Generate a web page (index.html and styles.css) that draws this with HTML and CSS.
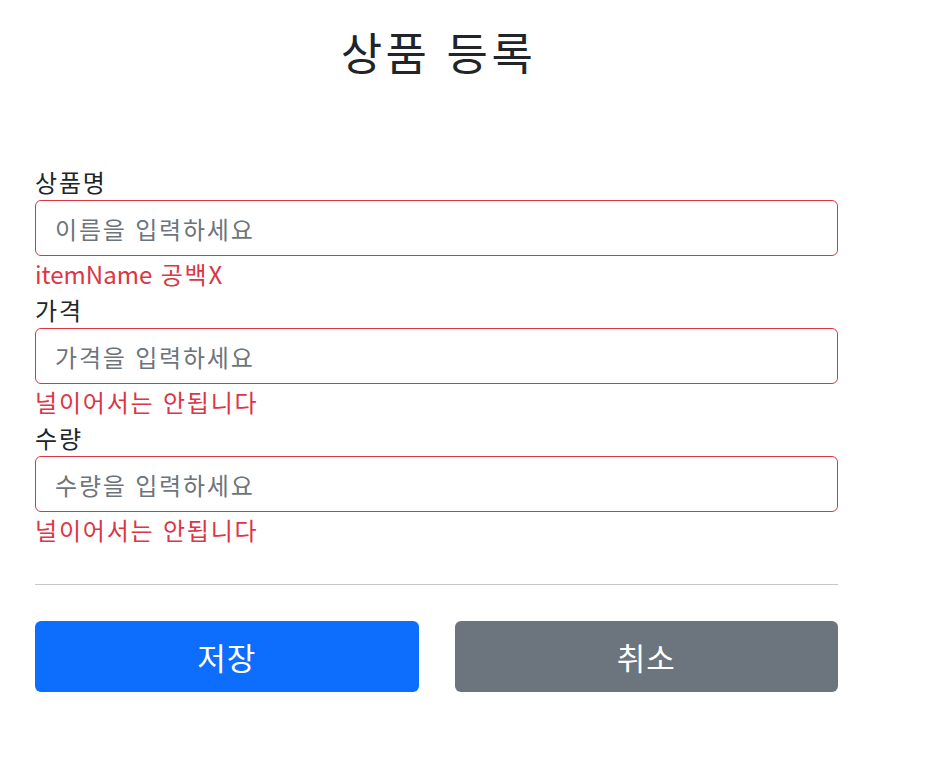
FILE: index.html
```html
<!DOCTYPE html>
<html lang="ko">
<head>
<meta charset="utf-8">
<title>상품 등록</title>
<link rel="stylesheet" href="styles.css">
</head>
<body>
<div class="container">
  <div class="title-wrap">
    <h2 class="title">상품 등록</h2>
  </div>
  <form class="form">
    <div class="field">
      <label class="label" for="itemName">상품명</label>
      <input class="input" id="itemName" type="text" placeholder="이름을 입력하세요">
      <div class="error"><span class="latin">itemName</span> 공백X</div>
    </div>
    <div class="field">
      <label class="label" for="price">가격</label>
      <input class="input" id="price" type="text" placeholder="가격을 입력하세요">
      <div class="error">널이어서는 안됩니다</div>
    </div>
    <div class="field">
      <label class="label" for="quantity">수량</label>
      <input class="input" id="quantity" type="text" placeholder="수량을 입력하세요">
      <div class="error">널이어서는 안됩니다</div>
    </div>
    <hr class="divider">
    <div class="actions">
      <button class="btn btn-primary" type="button">저장</button>
      <button class="btn btn-secondary" type="button">취소</button>
    </div>
  </form>
</div>
</body>
</html>
```
FILE: styles.css
```css
* {
  box-sizing: border-box;
}
body {
  margin: 0;
  background: #fff;
  color: #212529;
  font-family: "Noto Sans CJK KR", "Noto Sans", sans-serif;
}
.container {
  width: 803px;
  margin-left: 35px;
}
.title-wrap {
  padding-top: 23px;
  margin-bottom: 83px;
  text-align: center;
}
.title {
  margin: 0;
  padding-left: 4px;
  font-size: 45px;
  font-weight: 400;
  line-height: 58px;
  letter-spacing: 3.5px;
  color: #212529;
}
.form {
  margin: 0;
}
.field {
  display: flex;
  flex-direction: column;
}
.label {
  display: block;
  font-size: 24px;
  line-height: 36px;
  letter-spacing: 1.8px;
  color: #212529;
}
.input {
  display: block;
  width: 100%;
  height: 56px;
  padding: 0 19px;
  border: 1px solid #dc3545;
  border-radius: 6px;
  font-family: inherit;
  font-size: 24px;
  letter-spacing: 1.8px;
  color: #212529;
  background: #fff;
  outline: none;
}
.input::placeholder {
  color: #6c757d;
  opacity: 1;
}
.error {
  font-size: 24px;
  line-height: 36px;
  letter-spacing: 1.8px;
  color: #dc3545;
}
.latin {
  letter-spacing: 0;
}
.divider {
  margin: 36px 0;
  border: 0;
  border-top: 1px solid #c8c9ca;
  height: 0;
}
.actions {
  display: grid;
  grid-template-columns: 1fr 1fr;
  gap: 36px;
}
.btn {
  height: 71px;
  border: 0;
  border-radius: 6px;
  font-family: inherit;
  font-size: 31px;
  letter-spacing: 1px;
  color: #fff;
  cursor: pointer;
}
.btn-primary {
  background: #0d6efd;
}
.btn-secondary {
  background: #6c757d;
}
```
